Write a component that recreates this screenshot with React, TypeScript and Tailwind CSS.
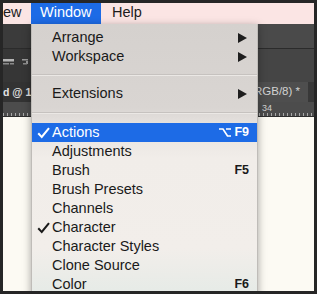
import React from "react";

function Check() {
  return (
    <svg width="13" height="12" viewBox="0 0 13 12" className="absolute left-[5px] top-[4px]">
      <path d="M0.5 6.9 L2 5.6 L4.6 8.5 L11.2 0.5 L12.8 1.7 L4.8 11.5 Z" fill="currentColor" />
    </svg>
  );
}

function Arrow() {
  return (
    <svg width="9" height="10" viewBox="0 0 9 10" className="ml-auto">
      <path d="M0 0 L9 5 L0 10 Z" fill="#1e1e1e" />
    </svg>
  );
}

function Row({
  label,
  checked,
  active,
  arrow,
  shortcut,
  option,
}: {
  label: string;
  checked?: boolean;
  active?: boolean;
  arrow?: boolean;
  shortcut?: string;
  option?: boolean;
}) {
  return (
    <div
      className={
        "relative h-[19px] flex items-center pl-[20px] pr-[10px] " +
        (active ? "bg-[#1d6be6] text-white" : "text-[#1a1a1a]")
      }
    >
      {checked && <Check />}
      <span className="leading-none">{label}</span>
      {arrow && <Arrow />}
      {shortcut && (
        <span className="ml-auto mr-[-2px] flex items-center gap-[3px] text-[12.5px] font-bold leading-none">
          {option && (
            <svg width="12" height="9" viewBox="0 0 12 9">
              <path d="M0 1 H4 L8.5 8 H12 M7 1 H12" fill="none" stroke="currentColor" strokeWidth="1.7" />
            </svg>
          )}
          {shortcut}
        </span>
      )}
    </div>
  );
}

function Sep({ h }: { h: string }) {
  return (
    <div className={"flex flex-col justify-center " + h}>
      <div className="h-px bg-[#c6c2bf]" />
      <div className="h-px bg-[#ebe8e5]" />
    </div>
  );
}

export default function App() {
  return (
    <div className="relative w-[317px] h-[294px] overflow-hidden border-[3px] border-[#262626] bg-[#3c3c3c] font-['Liberation_Sans',Arial,sans-serif] flex flex-col">
      {/* menubar */}
      <div className="h-[21px] shrink-0 bg-[#fbe5e4] flex items-stretch text-[14.5px] text-[#1c1c1c]">
        <span className="w-[28px] flex items-center pb-[2px] leading-none">ew</span>
        <span className="w-[70px] pl-[9px] flex items-center pb-[2px] bg-[#1d6be6] text-white leading-none">
          Window
        </span>
        <span className="ml-[11px] flex items-center pb-[2px] leading-none">Help</span>
      </div>

      {/* options bar */}
      <div className="h-[24px] shrink-0 flex">
        <div className="w-[40px] bg-[#3b3b3b]" />
        <div className="flex-1 bg-[#4a4a4a]" />
      </div>
      <div className="h-px shrink-0 bg-[#2b2b2b]" />
      {/* panel row */}
      <div className="h-[33px] shrink-0 flex">
        <div className="w-[40px] bg-[#363636] flex items-center pb-[4px]">
          <svg width="28" height="10" viewBox="0 0 28 10">
            <rect x="0" y="0" width="11" height="2.5" fill="#b5b5b5" />
            <rect x="0" y="4" width="6" height="1.5" fill="#8a8a8a" />
            <rect x="7" y="4" width="4" height="1.5" fill="#8a8a8a" />
            <rect x="19" y="0" width="6" height="1.5" fill="#9a9a9a" />
            <rect x="23" y="2" width="2" height="3" fill="#9a9a9a" />
            <rect x="20" y="4" width="4" height="1.5" fill="#8a8a8a" />
          </svg>
        </div>
        <div className="flex-1 bg-[#454545]" />
      </div>
      {/* tab bar */}
      <div className="h-[20px] shrink-0 flex">
        <div className="w-[140px] bg-[#333333] flex items-center text-[10.5px] font-bold text-[#e2e2e2] leading-none">
          d @ 1
        </div>
        <div className="flex-1 bg-[#4e4e4e] flex items-center justify-end pr-[8px] text-[11.5px] text-[#d2d2d2] leading-none">
          (RGB/8) *
        </div>
        <div className="w-[6px] bg-[#383838]" />
      </div>
      {/* ruler */}
      <div className="relative h-[15px] shrink-0 bg-[#4c4c4c] border-b border-[#2e2e2e]">
        <span className="absolute left-[259px] top-[2px] text-[9px] text-[#cfcfcf] leading-none">34</span>
        <div className="absolute left-0 right-0 bottom-0 h-[3px] bg-[repeating-linear-gradient(to_right,#a8a8a8_0px,#a8a8a8_1px,transparent_1px,transparent_4px)]" />
      </div>
      {/* canvas */}
      <div className="flex-1 bg-[#fcfaf3]" />

      {/* dropdown menu */}
      <div className="absolute left-[28px] top-[21px] w-[227px] h-[280px] border-x border-[#bfbcb8] shadow-[0_2px_8px_rgba(0,0,0,0.35)] bg-[linear-gradient(to_bottom,#d5d1ce_0%,#d9d5d2_30%,#e6e2df_36%,#f1ede9_48%,#f2eeea_80%,#e3eae6_100%)] pt-[4px] text-[14.5px]">
        <Row label="Arrange" arrow />
        <Row label="Workspace" arrow />
        <Sep h="h-[18px]" />
        <Row label="Extensions" arrow />
        <Sep h="h-[20px]" />
        <Row label="Actions" checked active shortcut="F9" option />
        <Row label="Adjustments" />
        <Row label="Brush" shortcut="F5" />
        <Row label="Brush Presets" />
        <Row label="Channels" />
        <Row label="Character" checked />
        <Row label="Character Styles" />
        <Row label="Clone Source" />
        <Row label="Color" shortcut="F6" />
      </div>
    </div>
  );
}
